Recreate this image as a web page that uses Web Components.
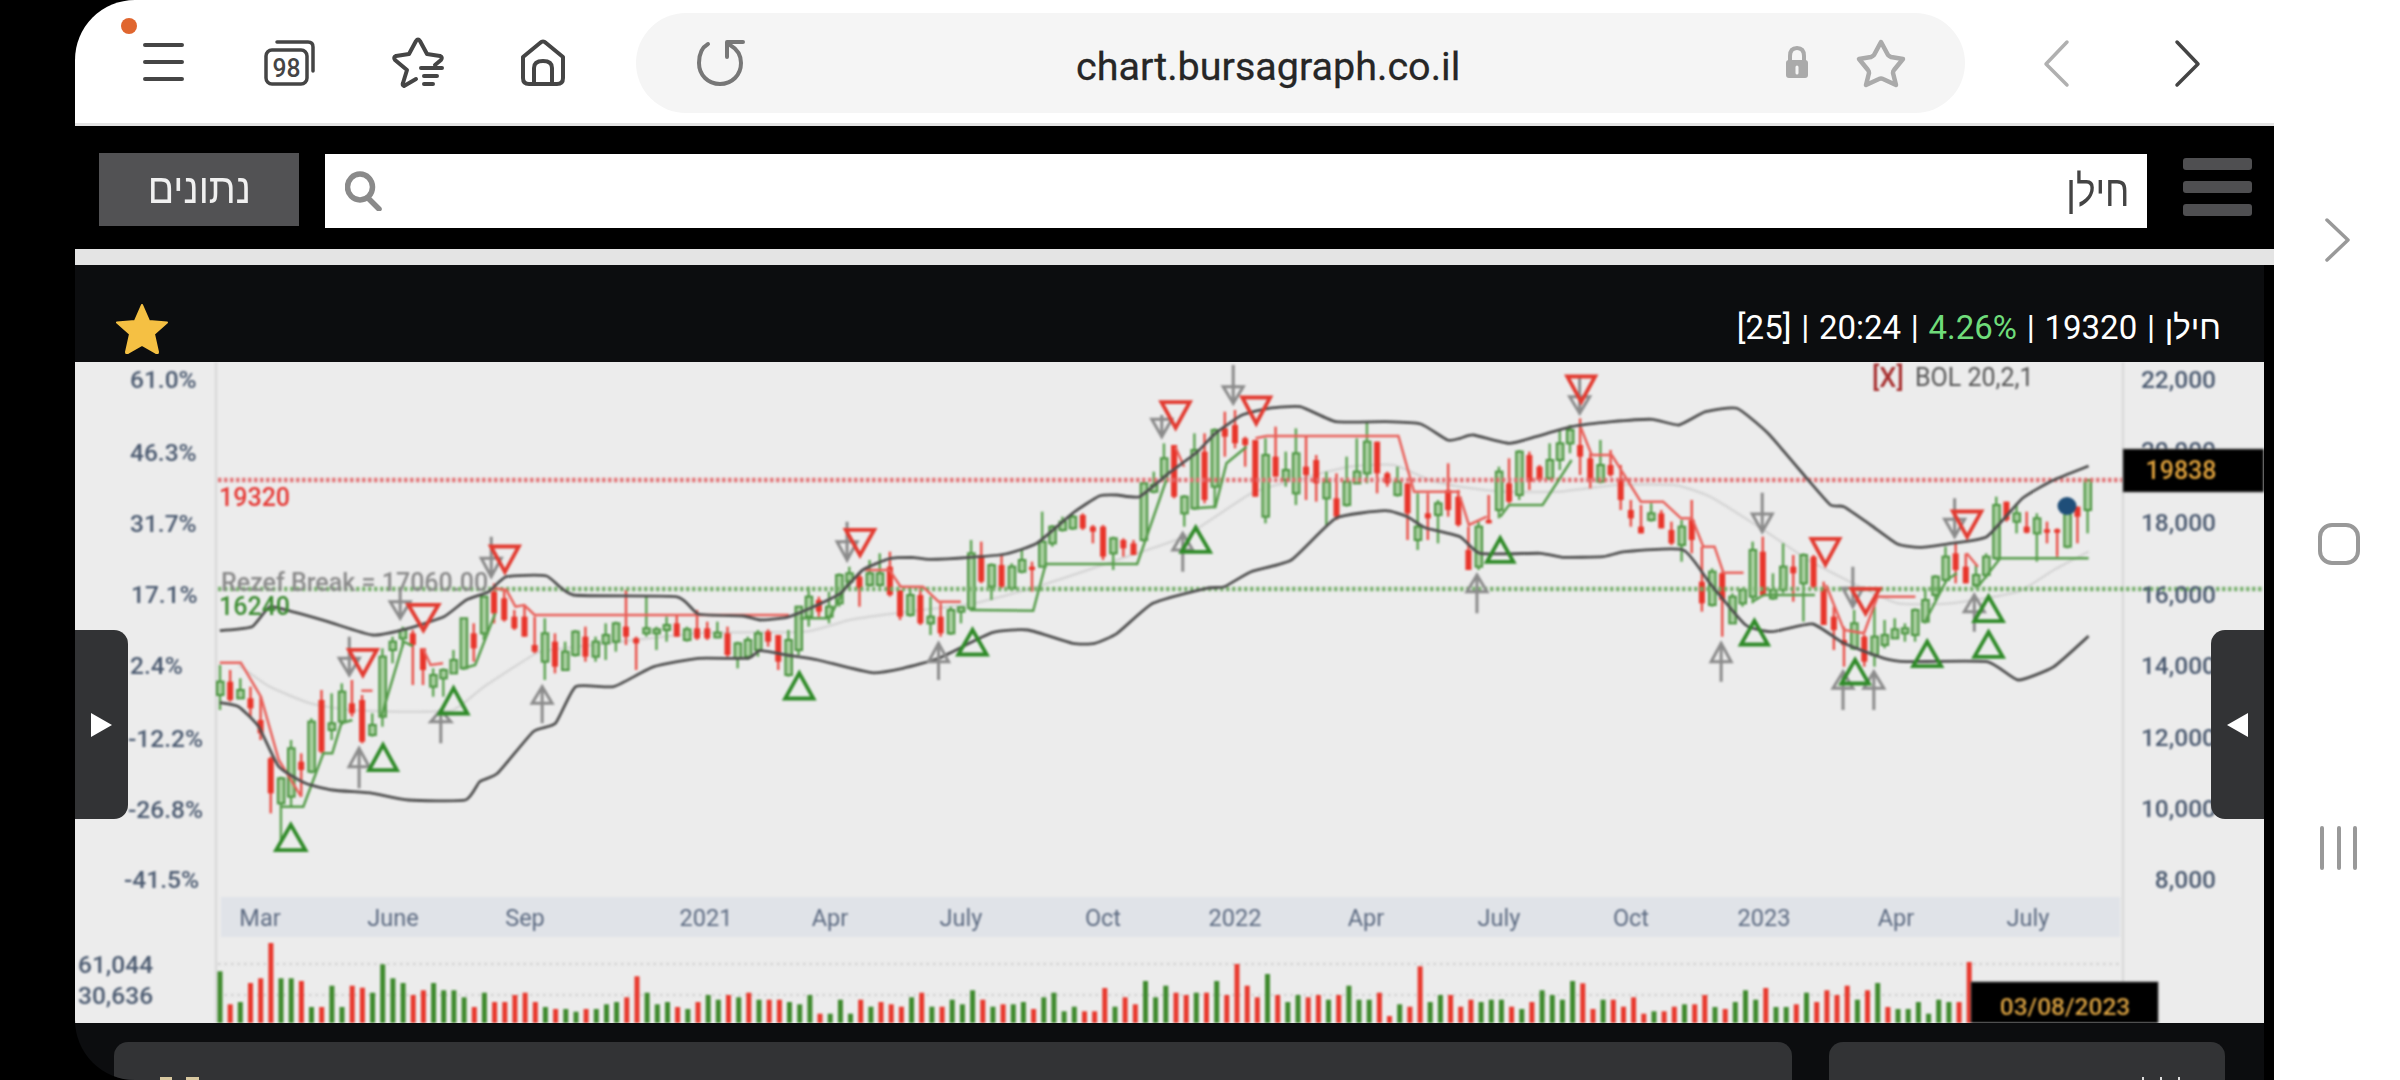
<!DOCTYPE html>
<html lang="he">
<head>
<meta charset="utf-8">
<title>chart.bursagraph.co.il</title>
<style>
html,body{margin:0;padding:0;background:#000;width:2400px;height:1080px;overflow:hidden;font-family:Roboto,"Liberation Sans",sans-serif}
</style>
</head>
<body>
<phone-frame>
  <browser-bar url="chart.bursagraph.co.il" tabs="98"></browser-bar>
  <search-bar label="נתונים" query="חילן"></search-bar>
  <chart-panel>
    <chart-header></chart-header>
    <stock-chart></stock-chart>
    <info-cards></info-cards>
  </chart-panel>
</phone-frame>
<script>
function shadow(el, html){ el.attachShadow({mode:'open'}).innerHTML = html; }

class PhoneFrame extends HTMLElement{
  connectedCallback(){ if(this.shadowRoot) return;
    shadow(this,`<style>
      :host{display:flex;width:2400px;height:1080px;background:#000;overflow:hidden}
      .screen{margin-left:75px;width:2199px;height:1080px;flex:none;display:flex;flex-direction:column;border-radius:60px 0 0 60px;overflow:hidden;background:#000}
      nav{flex:none;width:126px;height:1080px;background:#fff;display:flex;flex-direction:column;align-items:center;padding-top:218px;box-sizing:border-box;gap:260px}
      svg{display:block;fill:none;stroke:#999;stroke-linecap:round;stroke-linejoin:round}
    </style>
    <div class="screen"><slot></slot></div>
    <nav>
      <svg width="40" height="44" viewBox="0 0 40 44" stroke-width="3.5"><path d="M10 2 L31 22 L10 42"/></svg>
      <svg width="44" height="44" viewBox="0 0 44 44" stroke-width="4" style="margin-left:4px"><rect x="3" y="3" width="38" height="38" rx="12"/></svg>
      <svg width="44" height="44" viewBox="0 0 44 44" stroke-width="4" style="margin-left:3px"><path d="M5 2V42M22 2V42M38 2V42"/></svg>
    </nav>`);
  }
}
customElements.define('phone-frame',PhoneFrame);

class BrowserBar extends HTMLElement{
  connectedCallback(){ if(this.shadowRoot) return;
    const url=this.getAttribute('url'), tabs=this.getAttribute('tabs');
    shadow(this,`<style>
      :host{display:flex;position:relative;flex:none;height:126px;box-sizing:border-box;background:#fff;border-bottom:3px solid #e4e4e4;align-items:flex-start;padding:13px 0 0 68px;color:#454545}
      .dot{position:absolute;left:46px;top:18px;width:16px;height:16px;border-radius:50%;background:#e0662f}
      svg{display:block;flex:none;fill:none;stroke:#454545;stroke-width:4;stroke-linecap:round;stroke-linejoin:round;overflow:visible}
      .ic{margin-top:27px}
      .pill{flex:none;width:1329px;height:100px;margin-left:71px;border-radius:50px;background:#f5f5f5;display:flex;align-items:center;padding:0 59px 0 61px;box-sizing:border-box}
      .url{font:400 39.500px Roboto,sans-serif;color:#262626;margin-left:332px;white-space:nowrap;position:relative;top:3px;-webkit-text-stroke:.3px #262626}
      .end{margin-left:auto;display:flex;align-items:center;gap:47px}
    </style>
    <span class="dot"></span>
    <svg class="ic" width="41" height="38" viewBox="0 0 41 38" style="margin-top:30px"><path d="M2 2H39M2 19H39M2 36H39"/></svg>
    <svg class="ic" width="51" height="46" viewBox="0 0 51 46" style="margin-left:80px;margin-top:27px;stroke-width:3.5">
      <path d="M13 2H44Q49 2 49 7V31"/>
      <rect x="2" y="10" width="41" height="34" rx="6"/>
      <text x="22.500" y="37" text-anchor="middle" textLength="28" lengthAdjust="spacingAndGlyphs" style="font:500 26px Roboto,sans-serif;fill:#454545;stroke:none">${tabs}</text>
    </svg>
    <svg class="ic" width="49" height="48" viewBox="390 40 49 48" style="margin-left:77px;margin-top:26px"><path d="M414 80L402 87Q400 86 401 84L405 71L393 61Q391 58 394 57L407 55L414 42Q416 39 418 42L425 55L438 57Q441 58 439 61L433 66M419 69H440M422 77H435M422 85H431"/></svg>
    <svg class="ic" width="44" height="46" viewBox="0 0 44 46" style="margin-left:80px;margin-top:27px"><path d="M2 17L19 3Q22 0 25 3L42 17V38Q42 44 36 44H8Q2 44 2 38Z"/><path d="M13 44V28Q13 21 22 21Q31 21 31 28V44"/></svg>
    <div class="pill">
      <svg width="47" height="46" viewBox="0 0 47 46" style="stroke:#777"><path d="M11 4C4 8 2 15 2 23C2 35 11 44 23 44C35 44 44 35 44 23C44 15 40 9 33 5"/><path d="M30 17V2H46"/></svg>
      <span class="url">${url}</span>
      <span class="end">
        <svg width="24" height="34" viewBox="0 0 24 34" style="stroke:#aaa"><path d="M5 15V10Q5 2 12 2Q19 2 19 10V15"/><rect x="1" y="14" width="22" height="18" rx="3" fill="#aaa" stroke="none"/><path d="M12 21V27" stroke="#f5f5f5" stroke-width="3"/></svg>
        <svg width="50" height="48" viewBox="0 0 50 48" style="stroke:#aaa;stroke-width:4.5"><path d="M25 3L32 16Q33 17 35 18L47 20L38 31Q37 32 37 34L40 46L27 40Q25 39 23 40L10 46L13 34Q13 32 12 31L3 20L15 18Q17 17 18 16Z"/></svg>
      </span>
    </div>
    <svg class="ic" width="25" height="47" viewBox="0 0 25 47" style="margin-left:79px;margin-top:27px;stroke:#b0b0b0;stroke-width:3.5"><path d="M23 2L2 24L23 45"/></svg>
    <svg class="ic" width="25" height="47" viewBox="0 0 25 47" style="margin-left:106px;margin-top:27px;stroke:#444;stroke-width:3.5"><path d="M2 2L23 24L2 45"/></svg>`);
  }
}
customElements.define('browser-bar',BrowserBar);

class SearchBar extends HTMLElement{
  connectedCallback(){ if(this.shadowRoot) return;
    shadow(this,`<style>
      :host{display:flex;flex:none;height:139px;box-sizing:border-box;background:#000;border-bottom:16px solid #e4e4e4;padding-left:24px;align-items:flex-start}
      button{all:unset;box-sizing:border-box;width:200px;height:73px;margin-top:27px;background:#525254;color:#f0f0f0;display:flex;align-items:center;justify-content:center;font:400 41px "Liberation Sans",sans-serif;direction:rtl}
      button span{display:inline-block;transform:scaleX(.95)}
      .box{width:1822px;height:74px;margin:28px 0 0 26px;background:#fff;display:flex;align-items:center;justify-content:space-between;padding:0 18px 0 20px;box-sizing:border-box}
      .q{font:400 43px "Liberation Sans",sans-serif;color:#444;direction:rtl;display:inline-block;transform:scaleX(.86);transform-origin:right center}
      .burger{margin:32px 0 0 36px;width:69px;display:flex;flex-direction:column;gap:11px}
      .burger i{display:block;height:12px;border-radius:3px;background:#4f4f51}
      svg{display:block;fill:none;stroke:#8a8a8a;stroke-width:5.5;stroke-linecap:round}
    </style>
    <button><span>${this.getAttribute('label')}</span></button>
    <div class="box">
      <svg width="37" height="40" viewBox="0 0 37 40"><ellipse cx="15" cy="16" rx="12.500" ry="13"/><path d="M24 28L34 38"/></svg>
      <span class="q">${this.getAttribute('query')}</span>
    </div>
    <div class="burger"><i></i><i></i><i></i></div>`);
  }
}
customElements.define('search-bar',SearchBar);

class ChartPanel extends HTMLElement{
  connectedCallback(){ if(this.shadowRoot) return;
    shadow(this,`<style>:host{display:flex;flex-direction:column;flex:1;width:2189px;background:#0c0d0f;min-height:0}</style><slot></slot>`);
  }
}
customElements.define('chart-panel',ChartPanel);

class ChartHeader extends HTMLElement{
  connectedCallback(){ if(this.shadowRoot) return;
    shadow(this,`<style>
      :host{display:flex;flex:none;height:97px;justify-content:space-between;align-items:flex-start;padding:0 43px 0 41px;color:#fff}
      svg{display:block;margin-top:39px}
      .t{margin-top:41px;font:400 33px/44px Roboto,"Liberation Sans",sans-serif;white-space:nowrap;direction:rtl;unicode-bidi:isolate;word-spacing:1.500px}
      .g{color:#6fdc7a}
      .h{font-family:"Liberation Sans",sans-serif;display:inline-block;font-weight:400}
    </style>
    <svg width="52" height="50" viewBox="0 0 52 50"><path d="M26 1L33 17L51 18.500L38 30L42 48Q42 50 40 49L26 41L12 49Q10 50 10 48L14 30L1 18.500L19 17Z" fill="#f5c043" stroke="#f5c043" stroke-width="2" stroke-linejoin="round"/></svg>
    <div class="t"><bdi class="h">חילן</bdi> | <bdi>19320</bdi> | <bdi class="g">4.26%</bdi> | <bdi>20:24</bdi> | <bdi>[25]</bdi></div>`);
  }
}
customElements.define('chart-header',ChartHeader);

/* ---------- chart data, transcribed from the reference ---------- */
const Z3=p=>60+p/2.24, Z6=p=>760+p/2.24, Z7=p=>1460+p/2.24, Y=p=>340+p/3;
const CANDLES=`g 975 1110 1025 1065|r 990 1085 1025 1080|g 1015 1075 1050 1075|r 1040 1130 1075 1105|r 1070 1200 1140 1180|r 1250 1420 1255 1360|g 1310 1500 1315 1390|g 1200 1400 1225 1370|r 1240 1370 1265 1290|g 1135 1300 1145 1295|r 1050 1240 1080 1235|g 1060 1200 1150 1170|g 1030 1155 1055 1145|r 1020 1130 1090 1120|r 1065 1210 1080 1205|g 1120 1190 1155 1185|g 925 1160 950 1130|g 890 970 905 930|g 860 920 870 895|r 870 1035 880 915|r 925 1035 925 990|g 985 1070 1005 1040|g 985 1070 990 1015|g 930 1000 960 1000|g 835 990 835 985|r 850 965 880 925|g 770 900 770 880|r 730 850 755 820|r 750 845 775 840|r 810 870 830 865|r 795 890 830 890|r 830 940 915 935|g 835 1020 880 965|r 880 1000 905 980|g 905 990 935 990|g 870 950 875 945|r 860 965 890 950|g 890 965 905 950|g 850 960 885 910|g 845 935 850 905|r 750 915 860 890|r 890 990 895 910|g 770 890 865 880|g 860 930 868 880|g 830 905 855 870|r 825 890 850 890|g 860 905 868 900|r 810 900 865 895|r 845 900 865 895|g 845 895 878 892|r 860 950 880 945|g 905 985 910 955|g 890 960 900 950|g 870 950 880 930|r 868 920 875 905|r 885 990 885 965|g 870 1010 900 1005|g 800 945 800 930|g 740 860 770 830|r 770 830 780 815|g 755 850 800 830|g 700 800 705 790|g 680 740 700 725|r 700 800 710 745|g 660 740 700 735|g 640 740 700 735|r 635 770 680 765|r 750 840 750 830|g 740 830 765 825|r 740 855 765 850|g 770 885 830 850|r 790 890 830 880|g 800 885 810 880|g 800 850 802 815|g 600 810 640 805|r 605 730 645 725|g 670 780 675 740|r 645 745 675 740|g 670 750 680 745|g 630 700 660 695|r 665 755 680 690|g 515 680 605 680|g 555 620 560 610|g 530 575 545 570|g 525 570 530 565|r 520 570 525 565|r 555 610 560 575|r 555 660 560 650|g 590 690 595 640|r 595 650 600 625|r 600 645 610 645|g 430 605 430 600|g 395 460 435 455|g 310 420 355 410|r 315 475 315 470|g 465 560 470 520|g 280 510 330 505|r 280 490 335 480|g 265 505 270 440|r 215 350 265 290|r 210 325 255 310|r 290 380 295 315|r 300 470 300 470|g 295 550 345 530|r 260 410 350 410|g 335 440 390 420|g 265 495 340 460|r 290 480 380 405|r 345 485 360 430|g 395 555 425 475|r 400 540 475 530|g 350 500 425 495|g 295 430 395 430|g 245 430 305 400|r 305 460 305 400|r 395 440 400 430|g 380 470 425 465|r 430 600 430 520|g 460 630 560 600|r 460 600 520 535|g 480 610 490 525|r 370 530 450 510|r 450 560 470 555|r 560 690 630 690|g 545 690 560 680|r 465 550 540 550|g 380 535 395 510|r 355 490 430 485|g 330 480 335 465|r 335 450 345 425|r 375 425 380 420|g 310 420 360 415|g 270 390 310 360|g 255 340 270 310|r 235 405 315 350|r 340 445 355 415|g 300 430 375 425|r 330 410 375 405|r 375 510 420 480|r 480 560 510 535|r 495 580 560 580|g 490 545 520 540|r 510 565 520 565|r 545 615 570 610|g 540 665 560 615|r 480 640 540 600|r 620 815 725 790|g 685 800 695 795|r 695 890 700 780|g 760 850 770 850|g 745 800 750 790|g 605 790 630 770|r 590 770 635 765|g 700 780 750 775|g 610 760 680 750|r 645 785 680 700|g 640 845 645 730|r 645 745 650 740|r 725 855 745 855|r 800 930 830 870|r 860 980 900 915|g 810 930 850 925|r 885 980 890 965|g 800 980 890 945|g 840 925 885 915|g 835 895 868 895|g 850 905 865 880|g 805 905 810 885|g 745 850 780 845|g 705 780 710 765|g 620 730 650 720|r 605 730 640 690|r 640 730 680 730|g 675 745 705 735|g 640 715 650 705|g 470 660 495 655|r 485 545 485 540|g 490 580 520 545|r 515 580 560 578|g 520 665 535 580|r 545 610 568 578|r 565 650 568 578|g 500 625 520 620|r 500 610 500 530|g 420 580 420 510`;
const UPPER=[[Z3,[[358,872],[430,860],[470,800],[520,815],[600,845],[700,885],[780,865],[860,830],[910,780],[960,755],[1000,710],[1090,708],[1150,765],[1380,770],[1430,822],[1530,828]]],
 [Z6,[[0,840],[60,832],[120,800],[180,760],[230,690],[290,656],[340,652],[380,658],[470,652],[550,642],[620,610],[700,520],[760,468],[800,465],[850,470],[920,395],[980,335],[1020,280],[1080,225],[1140,205],[1210,200],[1290,245],[1400,245],[1480,252],[1540,300]]],
 [Z7,[[0,295],[30,285],[110,310],[170,290],[250,260],[340,245],[430,238],[490,255],[550,215],[620,205],[690,280],[780,420],[830,495],[860,500],[920,555],[980,612],[1030,622],[1100,610],[1180,590],[1260,475],[1330,420],[1408,378]]]];
const LOWER=[[Z3,[[358,1088],[400,1100],[445,1160],[490,1280],[550,1330],[610,1350],[700,1360],[780,1380],[908,1380],[940,1325],[980,1300],[1060,1175],[1110,1150],[1155,1040],[1240,1040],[1330,980],[1430,955],[1540,955]]],
 [Z6,[[0,932],[60,945],[130,960],[250,998],[320,985],[400,955],[520,878],[600,870],[700,910],[750,910],[800,880],[880,790],[1000,745],[1040,740],[1100,695],[1190,660],[1290,535],[1400,512],[1450,530],[1490,563]]],
 [Z7,[[0,590],[45,640],[180,640],[230,652],[320,650],[370,635],[500,630],[560,730],[640,855],[700,875],[790,852],[860,910],[950,955],[1000,965],[1180,965],[1250,1020],[1330,980],[1408,888]]]];
const MIDDLE=[[Z3,[[400,975],[470,1040],[560,1090],[650,1110],[760,1115],[880,1110],[950,1040],[1060,945],[1100,930],[1430,880]]],
 [Z6,[[100,875],[200,840],[290,822],[480,790],[620,740],[800,660],[950,590],[1100,460],[1200,420],[1320,380],[1420,375],[1500,420]]],
 [Z7,[[0,440],[100,455],[220,455],[350,435],[480,435],[560,470],[680,570],[780,660],[880,730],[980,790],[1100,790],[1250,755],[1330,690],[1408,635]]]];
const REDSTOP=[[Z3,[[358,968],[405,968],[450,1070],[490,1260],[540,1370]]],[Z3,[[675,1052],[700,1052]]],[Z3,[[813,925],[830,975],[858,970]]],
 [Z3,[[972,745],[1000,750],[1020,800],[1040,795],[1063,825],[1568,825]]],[Z6,[[0,825],[65,825]]],
 [Z6,[[235,690],[290,690],[315,740],[365,740],[400,785],[450,785]]],[Z6,[[930,320],[950,380]]],
 [Z6,[[1110,295],[1135,288],[1430,288],[1465,455],[1568,455]]],[Z7,[[0,470],[20,555],[60,530]]],
 [Z7,[[270,260],[295,345],[340,345],[405,485],[455,485],[495,535],[520,535],[545,620],[570,620],[590,698],[635,698]]],
 [Z7,[[820,735],[860,870],[905,880],[935,770],[1020,770]]],[Z7,[[1135,640],[1160,680]]]];
const GREENSTOP=[[Z3,[[495,1400],[545,1400],[590,1240],[610,1240],[630,1150],[655,1140]]],[Z3,[[720,1130],[770,905],[790,918]]],[Z3,[[904,985],[930,975],[975,820]]],
 [Z6,[[90,835],[155,835],[200,720]]],[Z6,[[470,810],[612,812],[640,672],[845,672],[910,420]]],[Z6,[[975,505],[1020,500],[1045,370],[1090,320]]],
 [Z7,[[90,530],[110,495],[185,495],[250,360]]],[Z7,[[655,785],[680,765],[795,765]]],[Z7,[[1040,850],[1090,720],[1113,700]]],[Z7,[[1160,740],[1210,655],[1408,655]]]];
const TRI_DOWN=[[Z3,645,712,925,1010],[Z3,778,850,790,875],[Z3,963,1030,615,700],[Z6,190,258,565,650],[Z6,897,965,182,268],[Z6,1078,1145,168,255],[Z7,238,305,105,190],[Z7,785,852,592,678],[Z7,1102,1170,510,595],[Z7,875,942,742,825]];
const TRI_UP=[[Z3,690,757,1210,1295],[Z3,848,915,1040,1125],[Z3,482,552,1450,1535],[Z6,54,122,995,1080],[Z6,442,510,865,948],[Z6,942,1010,558,640],[Z7,58,122,590,670],[Z7,627,692,838,918],[Z7,1013,1080,900,983],[Z7,1150,1218,765,848],[Z7,1150,1218,872,955],[Z7,852,918,955,1035]];
const ARROW_UP=[[Z3,670,1225,1280,1345],[Z3,853,1110,1145,1210],[Z3,1080,1040,1090,1150],[Z6,400,910,965,1020],[Z6,947,580,630,695],[Z7,38,705,755,820],[Z7,585,910,965,1025],[Z7,858,995,1045,1110],[Z7,927,995,1045,1110],[Z7,1152,765,815,875]];
const ARROW_DOWN=[[Z3,648,890,955,1005],[Z3,762,745,785,835],[Z3,966,590,655,710],[Z6,195,545,605,660],[Z6,900,225,238,290],[Z6,1060,75,140,190],[Z7,268,110,170,220],[Z7,677,458,522,575],[Z7,880,680,745,800],[Z7,1108,475,538,590]];
/* volume: colour + height */
const V4=`g 155 r 56 g 63 r 120 r 134 r 240 g 134 g 134 r 126 g 48 r 48 g 112 g 48 r 112 r 106 g 91 g 176 g 134 g 120 r 84 r 98 g 120 g 98 g 98 g 77 r 48 g 91 r 63 r 63 r 84 r 91 r 63 g 48 r 42 g 42 g 34 r 42 g 42 g 56 g 63 r 77 r 140 g 91 g 56 g 63 r 48 g 42 r 63 g 84 g 70 r 84 g 77 r 91 g 70 r 70 r 70 g 63 g 56 g 84 r 28 g 28 g 70 g 28 r 70`;
const V8=[['g',169],['r',155],['r',162],['r',169],['g',141],['r',127],['g',169],['r',169],['g',148],['g',162],['g',120],['r',148],['g',169],['r',162],['g',162],['g',155],['r',176],['g',141],['g',127],['g',183],['g',169],['r',183],['r',183],['r',113],['g',169],['r',141],['r',162],['g',92],['g',141],['g',106],['r',127],['r',134],['g',127],['r',127],['g',92],['r',134],['r',41],['r',106],['r',141],['g',71],['r',134],['g',155],['g',134],['r',141],['r',134],['g',148],['r',134],['g',106],['g',148],
 ['g',148],['r',127],['r',197],['g',162],['r',169],['r',48],['g',155],['g',134],['r',134],['r',169],['r',148],['g',155],['g',148],['g',148],['r',169],['g',176],['r',155],['g',120],['g',134],['g',148],['g',92],['r',99],['r',176],['g',148],['r',148],['r',169],['r',141],['r',190],['g',183],['r',183],['r',169],['g',162],['r',162],['r',134]].map(([c,t])=>[c,(218-t)/3]);
const V5=`g 680 r 686 g 665 g 630 g 658 r 623 g 680 g 680 r 672 g 637 r 665 r 630 r 644 r 616 g 658 r 630 g 608 r 680 g 686 g 686 g 665 g 700 g 658 g 665 r 665 r 545`;

const svgPts=(groups)=>{const a=[];groups.forEach(([f,ps])=>ps.forEach(([x,y])=>a.push([f(x),Y(y)])));return a;};
function smooth(p){const k=12;let d=`M${p[0][0].toFixed(1)} ${p[0][1].toFixed(1)}`;
  for(let i=0;i<p.length-1;i++){const a=p[Math.max(0,i-1)],b=p[i],c=p[i+1],e=p[Math.min(p.length-1,i+2)];
    d+=`C${(b[0]+(c[0]-a[0])/k).toFixed(1)} ${(b[1]+(c[1]-a[1])/k).toFixed(1)} ${(c[0]-(e[0]-b[0])/k).toFixed(1)} ${(c[1]-(e[1]-b[1])/k).toFixed(1)} ${c[0].toFixed(1)} ${c[1].toFixed(1)}`;}
  return d;}
const poly=([f,ps])=>ps.map(([x,y])=>`${f(x).toFixed(1)},${Y(y).toFixed(1)}`).join(' ');

class StockChart extends HTMLElement{
  connectedCallback(){ if(this.shadowRoot) return;
    let s='';
    s+=`<path d="M216 362V1023M2123 362V982" stroke="#d9d9d9" stroke-width="2.500"/>`;
    s+=`<rect x="221" y="897" width="1899" height="40" fill="#e0e3e8"/>`;
    s+=`<path d="M218 964H2122M218 995H2122" stroke="#d2d2d2" stroke-width="2.500" stroke-dasharray="2.500 4"/>`;
    s+=`<path d="${smooth(svgPts(MIDDLE))}" fill="none" stroke="#d6d6d6" stroke-width="2.500"/>`;
    const RED='#e8352b',GRN='#47923c';
    CANDLES.split('|').forEach((row,i)=>{
      const [c,wt,wb,bt,bb]=row.split(' ');const x=220+10.15*i;
      const col=c==='r'?RED:GRN;
      s+=`<line x1="${x}" x2="${x}" y1="${Y(+wt)}" y2="${Y(+wb)}" stroke="${c==='r'?'#e9524a':'#5fa555'}" stroke-width="2.500"/>`;
      const h=Math.max(3,(bb-bt)/3);
      if(c==='r') s+=`<rect x="${x-3}" y="${Y(+bt)}" width="6" height="${h}" fill="${col}"/>`;
      else s+=`<rect x="${x-3}" y="${Y(+bt)}" width="6.500" height="${h}" fill="#a9cfa0" stroke="${col}" stroke-width="2"/>`;
    });
    s+=`<path d="M218 480H2122" stroke="#e36a6c" stroke-width="4.500" stroke-dasharray="3.500 2.500" opacity=".9"/>`;
    s+=`<path d="M218 589H2264" stroke="#6fac64" stroke-width="4.500" stroke-dasharray="3.500 2.500" opacity=".9"/>`;
    REDSTOP.forEach(g=>s+=`<polyline points="${poly(g)}" fill="none" stroke="#e8605a" stroke-width="2.500"/>`);
    GREENSTOP.forEach(g=>s+=`<polyline points="${poly(g)}" fill="none" stroke="#559c4a" stroke-width="2.500"/>`);
    [UPPER,LOWER].forEach(L=>s+=`<path d="${smooth(svgPts(L))}" fill="none" stroke="#4e4e4e" stroke-width="2.800"/>`);
    ARROW_UP.forEach(([f,x,t,m,b])=>{const X=f(x);s+=`<path d="M${X} ${Y(t)}L${X-10} ${Y(m)}H${X+10}ZM${X} ${Y(t)}V${Y(b)}" fill="none" stroke="#8b8b8b" stroke-width="3"/>`;});
    ARROW_DOWN.forEach(([f,x,t,m,b])=>{const X=f(x);s+=`<path d="M${X} ${Y(b)}L${X-10} ${Y(m)}H${X+10}ZM${X} ${Y(t)}V${Y(b)}" fill="none" stroke="#8b8b8b" stroke-width="3"/>`;});
    TRI_DOWN.forEach(([f,a,b,t,e])=>s+=`<path d="M${f(a)+1} ${Y(t)+1.5}H${f(b)-1}L${f((a+b)/2)} ${Y(e)-1.5}Z" fill="none" stroke="#e23a30" stroke-width="3.800"/>`);
    TRI_UP.forEach(([f,a,b,t,e])=>s+=`<path d="M${f(a)+1} ${Y(e)-1.5}H${f(b)-1}L${f((a+b)/2)} ${Y(t)+1.5}Z" fill="none" stroke="#2f8a28" stroke-width="3.800"/>`);
    s+=`<ellipse cx="2067" cy="506" rx="9.500" ry="9" fill="#1f4e79"/>`;
    const all=[];const v4=V4.split(' ');for(let i=0;i<v4.length;i+=2)all.push([v4[i],+v4[i+1]/3]);
    V8.forEach(v=>all.push(v));
    const v5=V5.split(' ');for(let i=0;i<v5.length;i+=2)all.push([v5[i],(728-+v5[i+1])/3]);
    all.forEach(([c,h],i)=>{const x=220+10.17*i;s+=`<rect x="${(x-2.5).toFixed(1)}" y="${(1023-h).toFixed(1)}" width="5" height="${(h+2).toFixed(1)}" fill="${c==='r'?'#e8392e':'#3f8a2e'}"/>`;});
    const pct=[['61.0%',130,379],['46.3%',130,452],['31.7%',130,523],['17.1%',131,594],['2.4%',130,665],['-12.2%',128,738],['-26.8%',128,809],['-41.5%',124,879]];
    pct.forEach(([t,x,y])=>s+=`<text class="ax" x="${x}" y="${y+8.5}">${t}</text>`);
    [['22,000',379],['20,000',450],['18,000',522],['16,000',594],['14,000',665],['12,000',737],['10,000',808],['8,000',879]].forEach(([t,y])=>s+=`<text class="ax" x="2216" y="${y+8.5}" text-anchor="end">${t}</text>`);
    s+=`<text class="ax" x="78" y="973">61,044</text><text class="ax" x="78" y="1004">30,636</text>`;
    [['Mar',260],['June',393],['Sep',525],['2021',706],['Apr',830],['July',961],['Oct',1103],['2022',1235],['Apr',1366],['July',1499],['Oct',1631],['2023',1764],['Apr',1896],['July',2028]].forEach(([t,x])=>s+=`<text class="tm" x="${x}" y="926" text-anchor="middle">${t}</text>`);
    s+=`<text class="lb" x="219" y="506" fill="#e53935">19320</text>`;
    s+=`<text class="lb" x="219" y="615" fill="#3c8c32">16240</text>`;
    s+=`<text class="lb" x="221" y="591" fill="#8a8a8a">Rezef Break = 17060.00</text>`;
    s+=`<text x="1872" y="387" style="font:500 27px Roboto,sans-serif;fill:#a83232">[X]</text>`;
    s+=`<text x="1915" y="386" style="font:400 25px Roboto,sans-serif;fill:#555">BOL 20,2,1</text>`;
    s+=`<rect x="2123" y="449" width="141" height="43" fill="#000" stroke="#777" stroke-width="1"/>`;
    s+=`<text x="2181" y="479" text-anchor="middle" style="font:500 25px Roboto,sans-serif;fill:#e0a23c">19838</text>`;
    s+=`<rect x="1971" y="982" width="187" height="44" fill="#000" stroke="#555" stroke-width="1"/>`;
    s+=`<text x="2065" y="1015" text-anchor="middle" style="font:500 24.500px Roboto,sans-serif;fill:#d8a040">03/08/2023</text>`;

    shadow(this,`<style>
      :host{display:block;position:relative;flex:none;width:2189px;height:661px;background:#ececec;overflow:hidden}
      svg.c{display:block;filter:blur(1px)}
      .ax{font:500 24.500px Roboto,sans-serif;fill:#4b5a70}
      .tm{font:400 23.500px Roboto,sans-serif;fill:#5d6b82}
      .lb{font:500 25px Roboto,sans-serif}
      .h{position:absolute;top:268px;width:53px;height:189px;background:#323335;display:flex;align-items:center;justify-content:center}
      .h.l{left:0;border-radius:0 14px 14px 0}
      .h.r{right:0;border-radius:14px 0 0 14px}
      .h i{display:block;width:0;height:0;border-top:12px solid transparent;border-bottom:12px solid transparent}
      .h.l i{border-left:21px solid #fff}
      .h.r i{border-right:21px solid #fff}
    </style>
    <svg class="c" width="2189" height="661" viewBox="75 362 2189 661">${s}</svg>
    <div class="h l"><i></i></div><div class="h r"><i></i></div>`);
  }
}
customElements.define('stock-chart',StockChart);

class InfoCards extends HTMLElement{
  connectedCallback(){ if(this.shadowRoot) return;
    shadow(this,`<style>
      :host{display:flex;flex:none;height:57px;padding:19px 0 0 39px;box-sizing:border-box;gap:37px;overflow:hidden}
      .card{height:60px;background:#323335;border-radius:14px 14px 0 0;position:relative}
      .a{width:1678px}.b{width:396px}
      i{position:absolute;top:35px;height:4px;display:block}
    </style>
    <div class="card a"><i style="left:46px;width:12px;background:#d8c8a0"></i><i style="left:72px;width:13px;background:#d8c8a0"></i></div>
    <div class="card b"><i style="left:313px;width:2px;background:#ddd"></i><i style="left:331px;width:2px;background:#ddd"></i><i style="left:349px;width:2px;background:#ddd"></i></div>`);
  }
}
customElements.define('info-cards',InfoCards);
</script>
</body>
</html>
